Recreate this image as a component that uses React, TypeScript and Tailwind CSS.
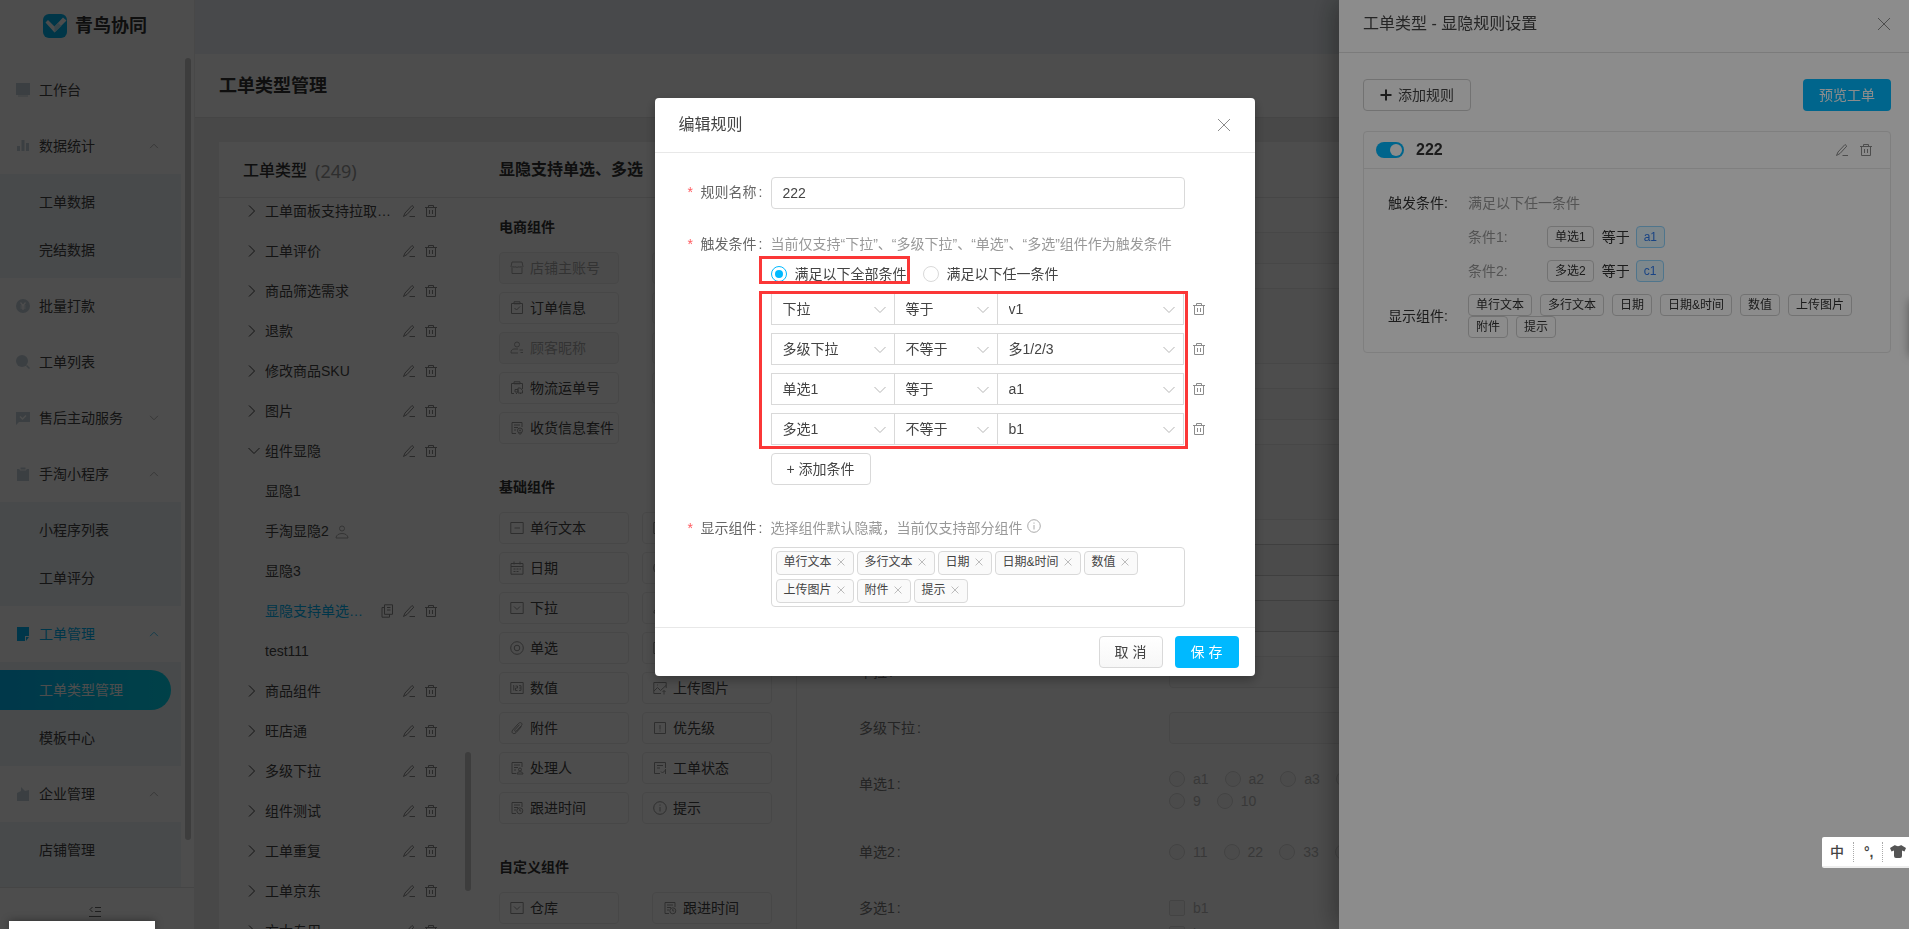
import { useState } from "react";
import type { ReactNode } from "react";
import clsx from "clsx";

const menu = [
  { icon: "desk", label: "工作台" },
  { icon: "bars", label: "数据统计", open: true, children: ["工单数据", "完结数据"] },
  { icon: "yen", label: "批量打款" },
  { icon: "search", label: "工单列表" },
  { icon: "chat", label: "售后主动服务", open: false },
  { icon: "clip", label: "手淘小程序", open: true, children: ["小程序列表", "工单评分"] },
  { icon: "note", label: "工单管理", open: true, active: true, children: ["工单类型管理", "模板中心"] },
  { icon: "factory", label: "企业管理", open: true, children: ["店铺管理"] },
];

const tree = [
  { label: "工单面板支持拉取…", arrow: "right", edit: true },
  { label: "工单评价", arrow: "right", edit: true },
  { label: "商品筛选需求", arrow: "right", edit: true },
  { label: "退款", arrow: "right", edit: true },
  { label: "修改商品SKU", arrow: "right", edit: true },
  { label: "图片", arrow: "right", edit: true },
  { label: "组件显隐", arrow: "down", edit: true },
  { label: "显隐1" },
  { label: "手淘显隐2", user: true },
  { label: "显隐3" },
  { label: "显隐支持单选…", edit: true, copy: true, active: true },
  { label: "test111" },
  { label: "商品组件", arrow: "right", edit: true },
  { label: "旺店通", arrow: "right", edit: true },
  { label: "多级下拉", arrow: "right", edit: true },
  { label: "组件测试", arrow: "right", edit: true },
  { label: "工单重复", arrow: "right", edit: true },
  { label: "工单京东", arrow: "right", edit: true },
  { label: "方太专用", arrow: "right", edit: true },
];

const sections = [
  {
    title: "电商组件",
    narrow: true,
    items: [
      { icon: "shop", label: "店铺主账号", disabled: true },
      { icon: "order", label: "订单编号", disabled: true },
      { icon: "order", label: "订单信息" },
      { icon: "order", label: "商品信息" },
      { icon: "customer", label: "顾客昵称", disabled: true },
      { icon: "docClock", label: "付款时间" },
      { icon: "truck", label: "物流运单号" },
      { icon: "truck", label: "物流公司" },
      { icon: "docPin", label: "收货信息套件" },
    ],
  },
  {
    title: "基础组件",
    items: [
      { icon: "line", label: "单行文本" },
      { icon: "line", label: "多行文本" },
      { icon: "calendar", label: "日期" },
      { icon: "target", label: "日期&时间" },
      { icon: "select", label: "下拉" },
      { icon: "customer", label: "多级下拉" },
      { icon: "target", label: "单选" },
      { icon: "select", label: "多选" },
      { icon: "number", label: "数值" },
      { icon: "image", label: "上传图片" },
      { icon: "attach", label: "附件" },
      { icon: "priority", label: "优先级" },
      { icon: "docUser", label: "处理人" },
      { icon: "docCheck", label: "工单状态" },
      { icon: "docClock", label: "跟进时间" },
      { icon: "info", label: "提示" },
    ],
  },
  {
    title: "自定义组件",
    narrow: true,
    items: [
      { icon: "select", label: "仓库" },
      { icon: "docClock", label: "跟进时间" },
    ],
  },
];

const conditions = [
  { field: "下拉", op: "等于", value: "v1" },
  { field: "多级下拉", op: "不等于", value: "多1/2/3" },
  { field: "单选1", op: "等于", value: "a1" },
  { field: "多选1", op: "不等于", value: "b1" },
];

const shown = ["单行文本", "多行文本", "日期", "日期&时间", "数值", "上传图片", "附件", "提示"];

const menuIcons: Record<string, ReactNode> = {
  desk: <path d="M0 0h14v12H0zM2 12.500h10v1H2z" />,
  bars: <path d="M1 7h3v5H1zM5.500 1h3v11h-3zM10 4h3v8h-3z" />,
  yen: (
    <>
      <circle cx="7" cy="7" r="7" />
      <path d="M4.500 3.500 7 6.500 9.500 3.500M4.500 7h5M4.500 9h5M7 6.500V11" fill="none" stroke="#fff" strokeWidth="1.200" />
    </>
  ),
  search: (
    <>
      <circle cx="6" cy="6" r="6" />
      <path d="m10.500 10.500 3 3" stroke="currentColor" strokeWidth="1.500" />
    </>
  ),
  chat: (
    <>
      <path d="M0 1h14v10H3l-3 3z" />
      <path d="m4 5.500 2.500 2.500L10 4.500" fill="none" stroke="#fff" strokeWidth="1.500" />
    </>
  ),
  clip: (
    <>
      <path d="M1 2h12v12H1z" />
      <path d="M4 0h6v3H4z" stroke="#fff" />
    </>
  ),
  note: <path d="M1 0h12v9H9v5H1zM10 10h3l-3 4z" />,
  factory: <path d="M1 14V6l4-2V0l4 4 4-1v11z" />,
};

const docLines = "M12 6V1.500H2v11h4M4 4h6M4 6.500h4M4 9h2";

const lineIcons: Record<string, ReactNode> = {
  shop: <path d="M2 1h10l1 4.500c0 1-2 1-2 0 0 1-2 1-2 0 0 1-4 1-4 0 0 1-2 1-2 0 0 1-2 1-2 0zM2 7v5.500h10V7" />,
  order: <path d="M1.500 2.500h11v10h-11zM4 .8h6v2H4zM4.500 7l2 2 3.500-3.500" />,
  customer: <path d="M9.500 3.500a2.500 2.500 0 1 1-5 0 2.500 2.500 0 0 1 5 0zM8 8H4c-2 0-3 1.500-3 4h7M9.500 9H13M10.500 11.500H13" />,
  truck: <path d="M4 12.500H1.500v-10h11V8M4 .8h6v2H4zM5 11V8.500h3V11zM8 7h2.500l2 2.500V12H8zM6 12.500h1M10 12.500h1" />,
  docPin: (
    <>
      <path d={docLines} />
      <circle cx="10" cy="9.500" r="2.500" />
      <circle cx="10" cy="9.500" r=".6" />
      <path d="m8.500 12 1.500 1.500 1.500-1.500" />
    </>
  ),
  line: <path d="M.8 1.500h12.400v11H.8zM4.500 7h5.500" />,
  calendar: <path d="M1 2.500h12v10.700H1zM1 5.500h12M4 .5v3M10 .5v3M3.500 8h2M6.500 8h2M9.500 8H11M3.500 10.500h2M6.500 10.500h2" />,
  select: <path d="M.8 1.500h12.400v11H.8zM4 5.500l3 3 3-3" />,
  target: (
    <>
      <circle cx="7" cy="7" r="6.300" />
      <circle cx="7" cy="7" r="2.800" />
    </>
  ),
  number: <path d="M.8 1.500h12.400v11H.8zM3 5l.8-.5V9.500M5.500 5h2v2h-2v2.500h2M9 4.700h2v4.700H9M9.200 7H11" />,
  image: <path d="M8 12.500H.8v-11h12.400V7M1 10l3.500-3.500 3 3L13 4.500M4 4h.8M11 13.500v-4M9.500 11 11 9.500l1.500 1.500" />,
  attach: <path d="M11.500 5.500 6 11.700c-2.500 2.300-5.300-.2-3.300-2.700l6-6.700c2-1.800 4.300.3 2.800 2.200L6.500 10c-1.200 1-2.500-.2-1.500-1.400L9.500 3.700" />,
  priority: <path d="M1.500 1.500h11v11h-11zM7 4v4.500M7 9.500v1" />,
  docUser: (
    <>
      <path d={docLines} />
      <circle cx="10" cy="8.500" r="1.500" />
      <path d="M7 13c0-3 6-3 6 0z" />
    </>
  ),
  docCheck: <path d="M7 12.500H1.500v-11h11V7M4 4.500h6M4 7h3M8 10.500l1.500 1.500 3-3M12.500 8v5" />,
  docClock: (
    <>
      <path d={docLines} />
      <circle cx="9.800" cy="9.800" r="3" />
      <path d="M9.800 8v2h1.500" />
    </>
  ),
  info: (
    <>
      <circle cx="7" cy="7" r="6.300" />
      <path d="M7 6v4.500M7 3.500v1.200" />
    </>
  ),
  edit: <path d="m3 9 7-7.500 1.800 1.600L5 10.500l-3.500 2zM7.500 12.500H13" />,
  trash: <path d="M1 3.500h12M4.500 3.500v-2h5v2M2.500 3.500v9h9v-9M5.500 6v4M8.500 6v4" />,
  copy: <path d="M4.500.8h8v9.500h-8zM4.500 3.500H2v9.700h7.500v-2.900M7 3.500h3.500M7 6h3.500" />,
  user: (
    <>
      <circle cx="7" cy="3.500" r="2.500" />
      <path d="M1 13c0-6 12-6 12 0z" />
    </>
  ),
  close: <path d="m1 1 12 12M13 1 1 13" />,
  right: <path d="M2 1.500 7.500 7 2 12.500" />,
  down: <path d="m1.500 4 5.500 5.500L12.500 4" />,
  up: <path d="m1.500 10 5.500-5.500 5.500 5.500" />,
};

function Icon({ name, className }: { name: string; className?: string }) {
  return (
    <svg viewBox="0 0 14 14" fill="none" stroke="currentColor" className={clsx("shrink-0", className)} aria-hidden="true">
      {lineIcons[name]}
    </svg>
  );
}

function IconButton({ name, label, className }: { name: string; label: string; className?: string }) {
  return (
    <button type="button" aria-label={label} className={clsx("text-[#8c8c8c]", className)}>
      <Icon name={name} className="h-full w-full" />
    </button>
  );
}

function Sidebar() {
  return (
    <aside className="flex w-[195px] shrink-0 flex-col border-r border-[#eee] bg-white">
      <div className="flex h-[58px] shrink-0 items-center gap-2 pb-1.5 pl-[43px]">
        <svg viewBox="0 0 24 24" className="h-6 w-6" aria-hidden="true">
          <rect width="24" height="24" rx="6" fill="#00b4ee" />
          <path d="M2.500 8.500 5 6l6.500 6.500L20 3.500l3.500 3-12 12z" fill="#fff" />
          <path d="m11.500 12.500 3.500-3.500 3.500 3-7 6.500z" fill="#b8e6f8" />
        </svg>
        <span className="text-lg font-bold text-[#333]">青鸟协同</span>
      </div>
      <div className="flex min-h-0 flex-1">
        <nav className="w-[181px] overflow-hidden pt-1">
          {menu.map((item) => (
            <div key={item.label}>
              <a
                href="#"
                className={clsx("flex h-14 items-center pr-[22px] pl-4", item.active ? "text-[#00b4f5]" : "text-[#444]")}
              >
                <svg
                  viewBox="0 0 14 14"
                  fill="currentColor"
                  className={clsx("mr-[9px] h-3.5 w-3.5", !item.active && "text-[#c3d0da]")}
                  aria-hidden="true"
                >
                  {menuIcons[item.icon]}
                </svg>
                <span className="flex-1">{item.label}</span>
                {item.open !== undefined && (
                  <Icon name={item.open ? "up" : "down"} className={clsx("h-2.5 w-2.5", !item.active && "text-[#999]")} />
                )}
              </a>
              {item.children && (
                <div className={clsx("bg-[#edf3f7] pt-1", item.label === "企业管理" ? "pb-8" : "pb-1")}>
                  {item.children.map((child) => (
                    <a key={child} href="#" className="flex h-12 items-center text-[#444]">
                      {child === "工单类型管理" ? (
                        <span className="flex h-10 w-[171px] items-center rounded-r-full bg-linear-to-r from-[#00b8f5] to-[#00d6ef] pl-[39px] text-white">
                          {child}
                        </span>
                      ) : (
                        <span className="pl-[39px]">{child}</span>
                      )}
                    </a>
                  ))}
                </div>
              )}
            </div>
          ))}
        </nav>
        <div className="ml-1 h-[782px] w-1.5 rounded-full bg-[#c9c9c9]" />
      </div>
      <div className="flex h-[42px] shrink-0 justify-center border-t border-[#e4e4e4] pt-[18px] pr-1">
        <svg viewBox="0 0 12 12" fill="none" stroke="#666" className="h-3 w-3" aria-hidden="true">
          <path d="M3.500 1 1 3.500 3.500 6M6 1.500h6M6 5.500h6M0 10.500h12" />
        </svg>
      </div>
    </aside>
  );
}

function TypeTree() {
  return (
    <div className="flex w-[256px] flex-col">
      <h2 className="flex h-14 shrink-0 items-center border-b border-[#e6e6e6] pt-0.5 pl-6 text-base font-medium text-[#333]">
        工单类型<span className="ml-2 font-['Noto_Sans'] text-lg font-normal text-[#999]">(249)</span>
      </h2>
      <div className="flex min-h-0 flex-1 overflow-hidden">
        <ul className="-mt-[7px] flex-1">
          {tree.map((row) => (
            <li key={row.label} className="flex h-10 items-center pr-[27px] pl-7">
              <span className="mr-1 w-3.5 text-[#444]">{row.arrow && <Icon name={row.arrow} className="h-3.5 w-3.5" />}</span>
              <span className={clsx("flex-1 whitespace-nowrap", row.active ? "text-[#00b4f5]" : "text-[#444]")}>
                {row.label}
                {row.user && <Icon name="user" className="ml-1.5 inline h-3.5 w-3.5 text-[#aaa]" />}
              </span>
              {row.copy && <IconButton name="copy" label="复制" className="mr-2 h-3.5 w-3.5" />}
              {row.edit && <IconButton name="edit" label="编辑" className="mr-2 h-3.5 w-3.5" />}
              {row.edit && <IconButton name="trash" label="删除" className="h-3.5 w-3.5" />}
            </li>
          ))}
        </ul>
        <div className="mt-[554px] mr-1 h-[139px] w-1.5 shrink-0 rounded-full bg-[#c9c9c9]" />
      </div>
    </div>
  );
}

function Palette() {
  return (
    <div className="w-[322px] border-r border-[#ececec] px-6 pt-[18px]">
      {sections.map((section) => (
        <section key={section.title} className="mb-8">
          <h3 className="mb-3.5 leading-[22px] font-bold text-[#333]">{section.title}</h3>
          <div className="grid grid-cols-2 justify-between gap-y-2">
            {section.items.map((item, i) => (
              <button
                key={item.label}
                type="button"
                className={clsx(
                  "flex h-8 items-center gap-1.5 rounded border border-[#ececec] pl-[10px] whitespace-nowrap",
                  section.narrow ? "w-[120px]" : "w-[130px]",
                  i % 2 === 1 && "justify-self-end",
                  item.disabled ? "bg-[#f9f9f9] text-[#aaa]" : "text-[#444]"
                )}
              >
                <Icon name={item.icon} className={clsx("h-3.5 w-3.5", !item.disabled && "text-[#999]")} />
                {item.label}
              </button>
            ))}
          </div>
        </section>
      ))}
    </div>
  );
}

function PreviewItem({ label, children }: { label: string; children: ReactNode }) {
  return (
    <div className="mb-6 flex items-start">
      <span className="w-[310px] shrink-0 leading-8 text-[#777]">
        {label}
        <span className="ml-0.5">:</span>
      </span>
      <div className="min-w-0 flex-1">{children}</div>
    </div>
  );
}

function Choices({ type, options, className }: { type: "radio" | "checkbox"; options: string[]; className?: string }) {
  return (
    <div className={clsx("flex flex-wrap", className)}>
      {options.map((option) => (
        <label key={option} className="mr-2 flex h-[22px] items-center text-[#bbb]">
          <input
            type={type}
            disabled
            className={clsx(
              "h-4 w-4 appearance-none border border-[#dcdcdc] bg-[#f9f9f9]",
              type === "radio" ? "rounded-full" : "rounded-xs"
            )}
          />
          <span className="px-2">{option}</span>
        </label>
      ))}
    </div>
  );
}

function Preview() {
  const disabled = "block h-8 w-full rounded border border-[#ececec] bg-[#fafafa]";
  const area = "block h-[76px] w-full resize-none rounded border border-[#ececec] bg-[#fafafa]";
  const enabled = "block h-8 w-full rounded border border-[#d0d0d0] bg-[#f7f7f7]";
  return (
    <div className="flex-1 overflow-hidden pt-[34px] pr-6 pl-[62px]">
      <PreviewItem label="标题"><input aria-label="标题" disabled className={disabled} /></PreviewItem>
      <PreviewItem label="多行文本"><textarea aria-label="多行文本" disabled className={area} /></PreviewItem>
      <PreviewItem label="单行文本"><input aria-label="单行文本" disabled className={disabled} /></PreviewItem>
      <PreviewItem label="提示"><textarea aria-label="提示" disabled className={area} /></PreviewItem>
      <PreviewItem label="日期"><input aria-label="日期" disabled className={enabled} /></PreviewItem>
      <PreviewItem label="日期&时间"><input aria-label="日期&时间" disabled className={enabled} /></PreviewItem>
      <PreviewItem label="下拉"><select aria-label="下拉" disabled className={clsx(disabled, "appearance-none opacity-100")} /></PreviewItem>
      <PreviewItem label="多级下拉"><select aria-label="多级下拉" disabled className={clsx(disabled, "appearance-none opacity-100")} /></PreviewItem>
      <PreviewItem label="单选1">
        <Choices type="radio" options={["a1", "a2", "a3", "a4", "a5", "a6", "a7", "a8", "9", "10"]} className="w-[450px]" />
      </PreviewItem>
      <PreviewItem label="单选2"><Choices type="radio" options={["11", "22", "33", "44"]} className="py-[5px]" /></PreviewItem>
      <PreviewItem label="多选1"><Choices type="checkbox" options={["b1", "b2"]} className="flex-col gap-1 py-[5px]" /></PreviewItem>
    </div>
  );
}

function Tag({ children, blue }: { children: ReactNode; blue?: boolean }) {
  return (
    <span
      className={clsx(
        "inline-block h-[22px] rounded border px-[7px] text-xs leading-5 whitespace-nowrap",
        blue ? "border-[#91d5ff] bg-[#e6f7ff] text-[#2f7cf0]" : "border-[#d0d0d0] text-[#333]"
      )}
    >
      {children}
    </span>
  );
}

function RuleDrawer() {
  return (
    <aside className="fixed inset-y-0 right-0 flex w-[570px] flex-col bg-white shadow-[-6px_0_24px_rgba(0,0,0,0.3)]">
      <header className="flex h-[53px] shrink-0 items-center justify-between border-b border-[#e0e0e0] pr-[18px] pb-1 pl-6">
        <h2 className="text-base text-[#444]">工单类型 - 显隐规则设置</h2>
        <IconButton name="close" label="关闭" className="h-3.5 w-3.5" />
      </header>
      <div className="pt-[26px] pr-[18px] pl-6">
        <div className="flex justify-between">
          <button type="button" className="flex h-8 items-center gap-1.5 rounded border border-[#d0d0d0] px-4 text-[#444]">
            <svg viewBox="0 0 12 12" stroke="#333" strokeWidth="2" className="h-3 w-3" aria-hidden="true">
              <path d="M6 .5v11M.5 6h11" />
            </svg>
            添加规则
          </button>
          <button type="button" className="h-8 rounded bg-[#00b9ff] px-4 text-white">预览工单</button>
        </div>
        <article className="mt-5 rounded border border-[#e8e8e8]">
          <header className="flex h-[37px] items-center border-b border-[#e8e8e8] pr-[17px] pl-3">
            <button type="button" role="switch" aria-checked="true" aria-label="启用规则" className="flex h-4 w-7 justify-end rounded-full bg-[#00b9ff] p-0.5">
              <span className="h-3 w-3 rounded-full bg-white" />
            </button>
            <h3 className="ml-3 flex-1 text-base font-bold text-[#333]">222</h3>
            <IconButton name="edit" label="编辑" className="mr-2.5 h-3.5 w-3.5" />
            <IconButton name="trash" label="删除" className="h-3.5 w-3.5" />
          </header>
          <div className="px-6 pt-[23px] pb-3.5">
            <div className="flex">
              <span className="w-20 shrink-0 leading-[22px] text-[#333]">触发条件:</span>
              <div>
                <p className="leading-[22px] text-[#999]">满足以下任一条件</p>
                {[["单选1", "a1"], ["多选2", "c1"]].map(([field, value], i) => (
                  <div key={field} className="mt-3 flex h-[22px] items-center">
                    <span className="w-[79px] text-[#999]">条件{i + 1}:</span>
                    <Tag>{field}</Tag>
                    <span className="mr-1.5 ml-2 text-[#333]">等于</span>
                    <Tag blue>{value}</Tag>
                  </div>
                ))}
              </div>
            </div>
            <div className="mt-3 flex items-center">
              <span className="w-20 shrink-0 text-[#333]">显示组件:</span>
              <div className="flex flex-wrap gap-x-2">
                {shown.map((name) => <Tag key={name}>{name}</Tag>)}
              </div>
            </div>
          </div>
        </article>
      </div>
      {/* edge shadow of the collapsed help panel */}
      <div className="absolute top-[300px] left-full h-14 w-4 shadow-[0_0_10px_rgba(0,0,0,0.35)]" />
    </aside>
  );
}

function FormRow({ label, htmlFor, children }: { label: string; htmlFor?: string; children: ReactNode }) {
  return (
    <div className="flex items-start">
      <label htmlFor={htmlFor} className="flex w-[83px] shrink-0 text-[#666]">
        <span className="w-[13px] text-[#ff5a5f]">*</span>
        {label}
        <span className="ml-0.5">:</span>
      </label>
      <div className="w-[414px]">{children}</div>
    </div>
  );
}

function Select({ value, label, className }: { value: string; label: string; className: string }) {
  return (
    <div className={clsx("relative", className)}>
      <select aria-label={label} className="h-8 w-full appearance-none border border-[#d9d9d9] bg-white px-[11px] text-[#444]">
        <option>{value}</option>
      </select>
      <Icon name="down" className="pointer-events-none absolute top-[10px] right-2 h-3.5 w-3.5 text-[#b5b5b5]" />
    </div>
  );
}

function EditRuleModal() {
  const [name, setName] = useState("222");
  const [match, setMatch] = useState("满足以下全部条件");
  return (
    <div role="dialog" aria-labelledby="rule-title" className="relative mx-auto w-[600px] rounded bg-white shadow-[0_4px_12px_rgba(0,0,0,0.3)]">
      <header className="flex h-[55px] items-center justify-between border-b border-[#e8e8e8] px-6">
        <h2 id="rule-title" className="text-base text-[#444]">编辑规则</h2>
        <IconButton name="close" label="关闭" className="h-3.5 w-3.5" />
      </header>
      <form className="pt-6 pb-5 pl-6" onSubmit={(e) => e.preventDefault()}>
        <div className="pl-[9px] leading-[30px]">
          <FormRow label="规则名称" htmlFor="rule-name">
            <input
              id="rule-name"
              value={name}
              onChange={(e) => setName(e.target.value)}
              className="block h-8 w-full rounded border border-[#d9d9d9] px-[11px] text-[#444] outline-none"
            />
          </FormRow>
        </div>
        <div className="mt-6 pl-[9px] leading-[22px]">
          <FormRow label="触发条件">
            <p className="whitespace-nowrap text-[#999]">当前仅支持“下拉”、“多级下拉”、“单选”、“多选”组件作为触发条件</p>
            <div className="relative mt-2 flex gap-4">
              {["满足以下全部条件", "满足以下任一条件"].map((option) => (
                <label key={option} className="flex items-center gap-2 text-[#444]">
                  <input
                    type="radio"
                    name="match"
                    checked={match === option}
                    onChange={() => setMatch(option)}
                    className="h-4 w-4 appearance-none rounded-full border border-[#d9d9d9] bg-white bg-clip-content p-[3px] checked:border-[#00b9ff] checked:bg-[#00b9ff]"
                  />
                  {option}
                </label>
              ))}
              <div className="pointer-events-none absolute -top-[7px] -left-3 h-7 w-[151px] border-3 border-[#fb3737]" />
            </div>
            <div className="relative mt-2 space-y-2">
              {conditions.map((row) => (
                <div key={row.field} className="flex w-[440px] items-center">
                  <Select value={row.field} label="组件" className="w-[124px]" />
                  <Select value={row.op} label="关系" className="-ml-px w-[104px]" />
                  <Select value={row.value} label="值" className="-ml-px w-[187px]" />
                  <IconButton name="trash" label="删除条件" className="ml-2 h-3.5 w-3.5" />
                </div>
              ))}
              <div className="pointer-events-none absolute -top-0.5 -left-3 h-[158px] w-[429px] border-3 border-[#fb3737]" />
            </div>
            <button type="button" className="mt-2 block h-8 rounded border border-[#d9d9d9] px-[15px] text-[#444]">+ 添加条件</button>
          </FormRow>
        </div>
        <div className="mt-8 pl-[9px] leading-[22px]">
          <FormRow label="显示组件">
            <p className="flex items-center text-[#999]">
              选择组件默认隐藏，当前仅支持部分组件
              <Icon name="info" className="mb-1 ml-1 h-3.5 w-3.5 text-[#aaa]" />
            </p>
            <div className="mt-2 flex flex-wrap gap-x-[3px] gap-y-1 rounded border border-[#d9d9d9] px-1 py-[3px]">
              {shown.map((item) => (
                <span key={item} className="flex h-6 items-center rounded border border-[#d9d9d9] bg-[#fafafa] pr-2 pb-0.5 pl-[7px] text-xs text-[#444]">
                  {item}
                  <IconButton name="close" label={"移除" + item} className="ml-[5px] h-2 w-2" />
                </span>
              ))}
            </div>
          </FormRow>
        </div>
      </form>
      <footer className="flex justify-end gap-3 border-t border-[#e8e8e8] py-2 pr-4">
        <button type="button" className="h-8 w-16 rounded border border-[#d9d9d9] bg-linear-to-b from-white to-[#f7f7f7] text-[#444]">取 消</button>
        <button type="button" className="h-8 w-16 rounded bg-[#00b9ff] text-white">保 存</button>
      </footer>
    </div>
  );
}

export default function App() {
  return (
    <div className="h-screen overflow-hidden font-['Liberation_Sans','Noto_Sans_CJK_SC',sans-serif] text-sm">
      <div className="flex h-full bg-[#eee]">
        <Sidebar />
        <main className="flex min-w-0 flex-1 flex-col">
          <div className="h-[54px] shrink-0 bg-[#edf2f7]" />
          <h1 className="flex h-16 shrink-0 items-center border-b border-[#e4e4e4] bg-white pl-6 text-lg font-bold text-[#333]">工单类型管理</h1>
          <div className="mt-6 ml-6 flex min-h-0 flex-1 bg-white">
            <TypeTree />
            <div className="flex min-w-0 flex-1 flex-col">
              <div className="flex h-14 shrink-0 items-center border-b border-[#e6e6e6] pr-[464px] pl-6">
                <h2 className="flex-1 text-base font-bold text-[#333]">显隐支持单选、多选</h2>
                <button type="button" className="h-8 rounded bg-[#e6f0f7] px-4 text-[#333]">显隐规则</button>
              </div>
              <div className="flex min-h-0 flex-1">
                <Palette />
                <Preview />
              </div>
            </div>
          </div>
        </main>
      </div>

      <div className="fixed inset-0 bg-black/45" />
      <RuleDrawer />
      <div className="fixed inset-0 overflow-hidden bg-black/45 pt-[98px]">
        <EditRuleModal />
      </div>

      {/* input method bar */}
      <div className="fixed right-0 bottom-[61px] flex h-[31px] w-[87px] items-center rounded-l-xs border-b-2 border-[#eee] bg-white pl-2 text-[#444]">
        <span className="w-[23px] shrink-0 text-sm font-medium">中</span>
        <span className="h-5 border-l border-dotted border-[#aaa]" />
        <span className="w-7 shrink-0 pl-2.5 font-bold">°,</span>
        <span className="h-5 border-l border-dotted border-[#aaa]" />
        <svg viewBox="0 0 16 13" fill="#555" className="ml-[7px] h-[13px] w-4 shrink-0" aria-hidden="true">
          <path d="M5 0c1 1.500 5 1.500 6 0l5 3-1.500 3.500L12 5.500V11q0 2-2 2H6q-2 0-2-2V5.500L1.500 6.500 0 3z" />
        </svg>
      </div>
      {/* browser status bubble */}
      <div className="fixed bottom-0 left-[9px] h-2 w-[146px] bg-white shadow-[0_0_8px_rgba(0,0,0,0.4)]" />
    </div>
  );
}
